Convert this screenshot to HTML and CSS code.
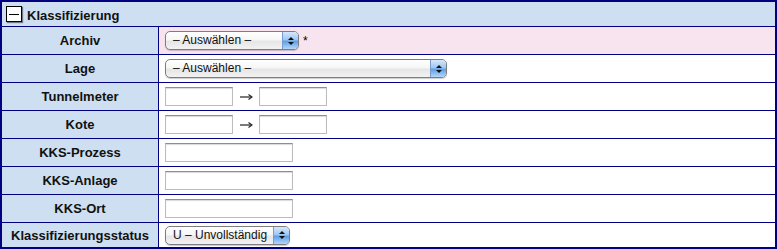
FILE: index.html
```html
<!DOCTYPE html>
<html>
<head>
<meta charset="utf-8">
<link rel="stylesheet" href="styles.css">
</head>
<body>
<table class="form">
  <tr class="head">
    <td colspan="2">
      <div class="head-inner">
        <span class="toggle"><span class="minus"></span></span>
        <span class="title">Klassifizierung</span>
      </div>
    </td>
  </tr>
  <tr class="req">
    <td class="label">Archiv</td>
    <td class="value"><span class="sel w1"><span class="txt">– Auswählen –</span><span class="step"><i class="up"></i><i class="dn"></i></span></span><span class="star">*</span></td>
  </tr>
  <tr>
    <td class="label">Lage</td>
    <td class="value"><span class="sel w2"><span class="txt">– Auswählen –</span><span class="step"><i class="up"></i><i class="dn"></i></span></span></td>
  </tr>
  <tr>
    <td class="label">Tunnelmeter</td>
    <td class="value"><span class="inp short"></span><svg class="arrow" width="26" height="8" viewBox="0 0 26 8"><path d="M7 4H18" stroke="#222" stroke-width="1.2"/><path d="M15.5 1.5L19 4L15.5 6.5" fill="none" stroke="#222" stroke-width="1.1"/></svg><span class="inp short"></span></td>
  </tr>
  <tr>
    <td class="label">Kote</td>
    <td class="value"><span class="inp short"></span><svg class="arrow" width="26" height="8" viewBox="0 0 26 8"><path d="M7 4H18" stroke="#222" stroke-width="1.2"/><path d="M15.5 1.5L19 4L15.5 6.5" fill="none" stroke="#222" stroke-width="1.1"/></svg><span class="inp short"></span></td>
  </tr>
  <tr>
    <td class="label">KKS-Prozess</td>
    <td class="value"><span class="inp long"></span></td>
  </tr>
  <tr>
    <td class="label">KKS-Anlage</td>
    <td class="value"><span class="inp long"></span></td>
  </tr>
  <tr>
    <td class="label">KKS-Ort</td>
    <td class="value"><span class="inp long"></span></td>
  </tr>
  <tr class="last">
    <td class="label">Klassifizierungsstatus</td>
    <td class="value"><span class="sel w3"><span class="txt">U – Unvollständig</span><span class="step"><i class="up"></i><i class="dn"></i></span></span></td>
  </tr>
</table>
</body>
</html>
```
FILE: styles.css
```css
body {
  margin: 0;
  font-family: "Liberation Sans", Arial, sans-serif;
  background: #fff;
}
.form {
  border-collapse: collapse;
  width: 777px;
  border: 2px solid #000080;
}
.form td {
  border: 1px solid #000080;
  padding: 0;
  height: 27px;
}
.head td {
  background: #cddff0;
  height: 24px;
}
.head-inner {
  display: flex;
  align-items: center;
  gap: 5px;
  padding-left: 4px;
}
.toggle {
  width: 14px;
  height: 14px;
  border: 1px solid #000;
  background: #fff;
  box-shadow: 1px 1px 1px rgba(0,0,0,0.45);
  display: flex;
  align-items: center;
  justify-content: center;
}
.minus {
  width: 10px;
  height: 1px;
  background: #000;
}
.title {
  font-weight: bold;
  font-size: 13px;
  color: #111;
  padding-top: 2px;
}
.label {
  width: 156px;
  background: #cddff0;
  font-weight: bold;
  font-size: 13px;
  color: #111;
  text-align: center;
}
.value {
  padding-left: 6px !important;
  background: #fff;
}
.req .value {
  background: #f8e4ef;
}
.last td {
  height: 24px;
}
.sel {
  display: inline-flex;
  vertical-align: middle;
  border: 1px solid #7d7d7d;
  border-radius: 5px;
  background: linear-gradient(#ffffff, #f6f6f6 45%, #e6e6e6 55%, #f2f2f2);
  box-shadow: 0 1px 1px rgba(0,0,0,0.2);
  overflow: hidden;
  box-sizing: border-box;
  height: 19px;
}
.w1 { width: 134px; }
.w2 { width: 282px; }
.w3 { width: 125px; }
.txt {
  flex: 1;
  font-size: 12px;
  color: #111;
  padding-left: 7px;
  line-height: 17px;
  white-space: nowrap;
}
.step {
  width: 15px;
  background: linear-gradient(#d6e8fc, #9cc7f4 45%, #5e9fea 55%, #b4d7f8);
  border-left: 1px solid #7a9ccc;
  display: flex;
  flex-direction: column;
  align-items: center;
  justify-content: center;
  gap: 2px;
}
.up, .dn {
  display: block;
  width: 0;
  height: 0;
  border-left: 3px solid transparent;
  border-right: 3px solid transparent;
}
.up { border-bottom: 3px solid #111; }
.dn { border-top: 3px solid #111; }
.star {
  font-size: 12px;
  margin-left: 4px;
  vertical-align: middle;
}
.inp {
  display: inline-block;
  vertical-align: middle;
  height: 19px;
  box-sizing: border-box;
  border: 1px solid #bcbcbc;
  border-top-color: #8e8e8e;
  box-shadow: inset 0 1px 1px rgba(0,0,0,0.15);
  background: #fff;
}
.short { width: 68px; }
.long { width: 128px; }
.arrow {
  display: inline-block;
  vertical-align: middle;
}
```
